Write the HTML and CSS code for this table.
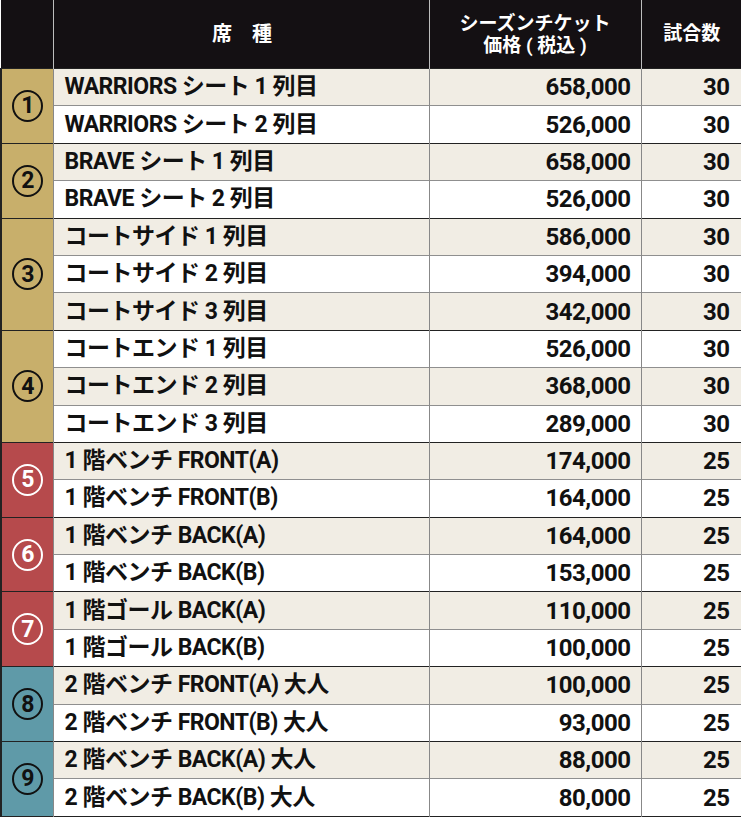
FILE: index.html
```html
<!DOCTYPE html>
<html lang="ja">
<head>
<meta charset="utf-8">
<link rel="stylesheet" href="styles.css">
</head>
<body>
<table class="price">
  <colgroup>
    <col class="c-no"><col class="c-seat"><col class="c-price"><col class="c-games">
  </colgroup>
  <thead>
    <tr class="head">
      <th class="h-no"></th>
      <th class="h-seat">席　種</th>
      <th class="h-price">シーズンチケット<br>価格 ( 税込 )</th>
      <th class="h-games">試合数</th>
    </tr>
  </thead>
  <tbody>
    <tr class="odd grp"><td class="no gold" rowspan="2"><span class="circ">1</span></td><td class="seat">WARRIORS シート 1 列目</td><td class="num">658,000</td><td class="num g">30</td></tr>
    <tr class="even"><td class="seat">WARRIORS シート 2 列目</td><td class="num">526,000</td><td class="num g">30</td></tr>
    <tr class="odd grp"><td class="no gold" rowspan="2"><span class="circ">2</span></td><td class="seat">BRAVE シート 1 列目</td><td class="num">658,000</td><td class="num g">30</td></tr>
    <tr class="even"><td class="seat">BRAVE シート 2 列目</td><td class="num">526,000</td><td class="num g">30</td></tr>
    <tr class="odd grp"><td class="no gold" rowspan="3"><span class="circ">3</span></td><td class="seat">コートサイド 1 列目</td><td class="num">586,000</td><td class="num g">30</td></tr>
    <tr class="even"><td class="seat">コートサイド 2 列目</td><td class="num">394,000</td><td class="num g">30</td></tr>
    <tr class="odd"><td class="seat">コートサイド 3 列目</td><td class="num">342,000</td><td class="num g">30</td></tr>
    <tr class="even grp"><td class="no gold" rowspan="3"><span class="circ">4</span></td><td class="seat">コートエンド 1 列目</td><td class="num">526,000</td><td class="num g">30</td></tr>
    <tr class="odd"><td class="seat">コートエンド 2 列目</td><td class="num">368,000</td><td class="num g">30</td></tr>
    <tr class="even"><td class="seat">コートエンド 3 列目</td><td class="num">289,000</td><td class="num g">30</td></tr>
    <tr class="odd grp"><td class="no red" rowspan="2"><span class="circ">5</span></td><td class="seat">1 階ベンチ FRONT(A)</td><td class="num">174,000</td><td class="num g">25</td></tr>
    <tr class="even"><td class="seat">1 階ベンチ FRONT(B)</td><td class="num">164,000</td><td class="num g">25</td></tr>
    <tr class="odd grp"><td class="no red" rowspan="2"><span class="circ">6</span></td><td class="seat">1 階ベンチ BACK(A)</td><td class="num">164,000</td><td class="num g">25</td></tr>
    <tr class="even"><td class="seat">1 階ベンチ BACK(B)</td><td class="num">153,000</td><td class="num g">25</td></tr>
    <tr class="odd grp"><td class="no red" rowspan="2"><span class="circ">7</span></td><td class="seat">1 階ゴール BACK(A)</td><td class="num">110,000</td><td class="num g">25</td></tr>
    <tr class="even"><td class="seat">1 階ゴール BACK(B)</td><td class="num">100,000</td><td class="num g">25</td></tr>
    <tr class="odd grp"><td class="no blue" rowspan="2"><span class="circ">8</span></td><td class="seat">2 階ベンチ FRONT(A) 大人</td><td class="num">100,000</td><td class="num g">25</td></tr>
    <tr class="even"><td class="seat">2 階ベンチ FRONT(B) 大人</td><td class="num">93,000</td><td class="num g">25</td></tr>
    <tr class="odd grp"><td class="no blue" rowspan="2"><span class="circ">9</span></td><td class="seat">2 階ベンチ BACK(A) 大人</td><td class="num">88,000</td><td class="num g">25</td></tr>
    <tr class="even"><td class="seat">2 階ベンチ BACK(B) 大人</td><td class="num">80,000</td><td class="num g">25</td></tr>
  </tbody>
</table>
</body>
</html>
```
FILE: styles.css
```css
html, body {
  margin: 0;
  padding: 0;
  background: #ffffff;
}
body {
  font-family: Roboto, "Noto Sans CJK JP", sans-serif;
  font-weight: 700;
  color: #111111;
}
.price {
  border-collapse: collapse;
  table-layout: fixed;
  width: 741px;
  border-bottom: 1px solid #222;
}
.c-no { width: 52px; }
.c-seat { width: 376px; }
.c-price { width: 212px; }
.c-games { width: 101px; }

.head th {
  background: #141013;
  color: #ffffff;
  height: 66px;
  padding: 0;
  font-weight: 700;
  font-size: 19px;
  line-height: 22px;
  border-left: 1px solid #bdbdbd;
}
.head th.h-no { border-left: 1px solid #141013; }
.head th.h-seat { font-size: 20px; padding-left: 2px; }
.head th.h-price { padding-top: 2px; }

tbody tr { height: 37.4px; }
tbody td {
  padding: 0;
  border-top: 1px solid #8f8f8f;
  border-left: 1px solid #555;
  border-right: 1px solid #888;
  font-size: 23px;
  line-height: 26px;
}
tbody tr.grp td { border-top: 1px solid #222; }
tr.odd td { background: #f1ede4; }
tr.even td { background: #ffffff; }

td.seat { padding-left: 11px; white-space: nowrap; letter-spacing: -0.5px; }
td.num {
  text-align: right;
  padding-right: 10px;
  font-size: 24px;
  letter-spacing: -0.5px;
}
td.num.g { padding-right: 12px; }

td.no { text-align: center; vertical-align: middle; border-left: 2px solid #222; padding-left: 1px; }
tr td.gold { background: #c8af6b; }
tr td.red { background: #b64a4c; }
tr td.blue { background: #5f9aa8; }

.circ {
  display: inline-flex;
  align-items: center;
  justify-content: center;
  width: 27px;
  height: 28px;
  border: 2px solid #111;
  border-radius: 50%;
  font-size: 23px;
  line-height: 1;
  color: #111;
}
.red .circ { border-color: #ffffff; color: #ffffff; }
```
